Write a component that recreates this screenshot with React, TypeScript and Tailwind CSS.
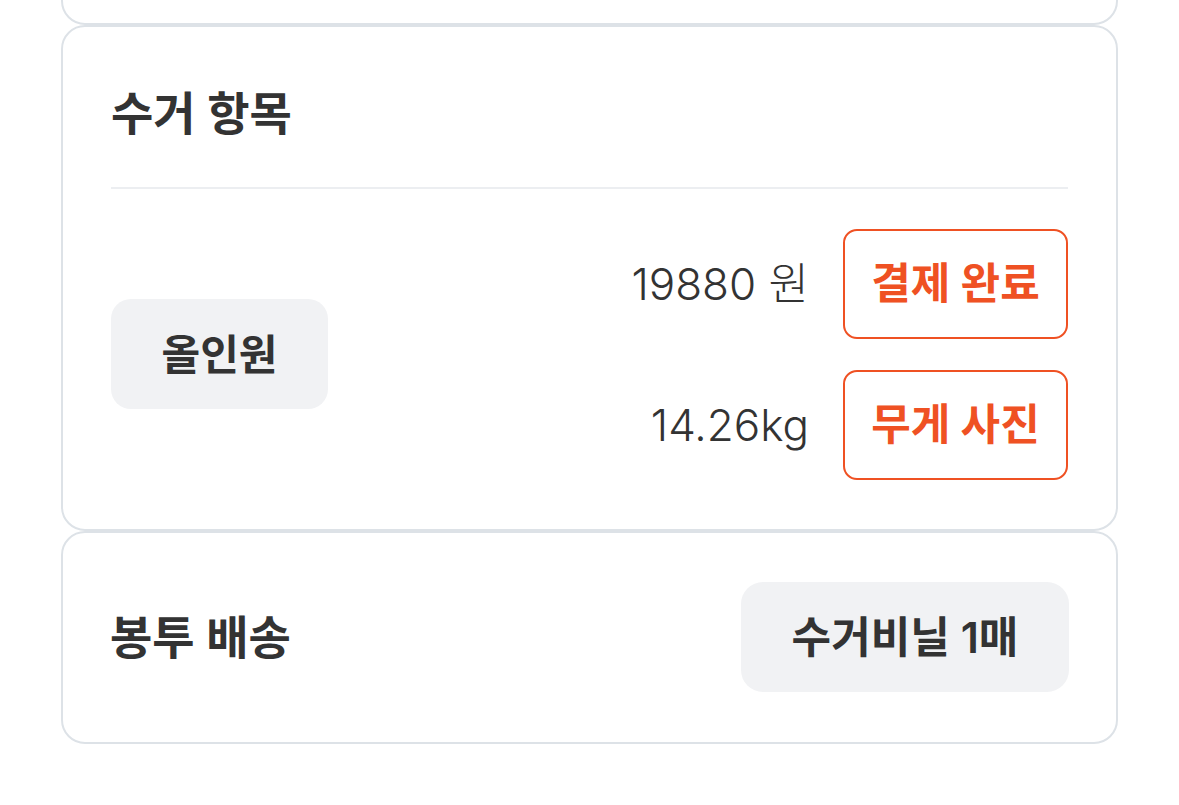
import React from "react";

const font = { fontFamily: "Inter, 'Noto Sans CJK KR', sans-serif" };

function OutlineButton({ children }: { children: React.ReactNode }) {
  return (
    <div className="flex h-[110px] w-[225px] items-center justify-center rounded-[14px] border-2 border-[#ef5123] text-[43px] font-bold text-[#ef5123]">
      {children}
    </div>
  );
}

export default function App() {
  return (
    <div className="h-[805px] w-full overflow-hidden bg-white text-[#333333]" style={font}>
      <div className="flex flex-col px-[61px]">
        {/* previous card, mostly scrolled out of view */}
        <div className="-mt-[75px] h-[100px] rounded-[24px] border-2 border-[#dde2e7]" />

        {/* 수거 항목 */}
        <div className="flex flex-col rounded-[24px] border-2 border-[#dde2e7] px-[48px] pt-[48px] pb-[50px]">
          <div className="h-[112px] text-[46px] leading-[76px] font-semibold">수거 항목</div>
          <div className="h-[2px] bg-[#eceef1]" />
          <div className="mt-[40px] flex h-[250px] items-center justify-between">
            <div className="flex h-[110px] w-[217px] items-center justify-center rounded-[20px] bg-[#f1f2f4] text-[42px] font-semibold">
              올인원
            </div>
            <div className="flex flex-col gap-[31px]">
              <div className="flex items-center justify-end gap-[34px]">
                <span className="text-[44px] font-light">19880 원</span>
                <OutlineButton>결제 완료</OutlineButton>
              </div>
              <div className="flex items-center justify-end gap-[34px]">
                <span className="text-[44px] font-light">14.26kg</span>
                <OutlineButton>무게 사진</OutlineButton>
              </div>
            </div>
          </div>
        </div>

        {/* 봉투 배송 */}
        <div className="flex items-center justify-between rounded-[24px] border-2 border-[#dde2e7] px-[47px] pt-[49px] pb-[50px]">
          <div className="text-[46px] font-semibold">봉투 배송</div>
          <div className="flex h-[110px] w-[328px] items-center justify-center rounded-[22px] bg-[#f1f2f4] text-[43px] font-semibold">
            수거비닐 1매
          </div>
        </div>
      </div>
    </div>
  );
}
